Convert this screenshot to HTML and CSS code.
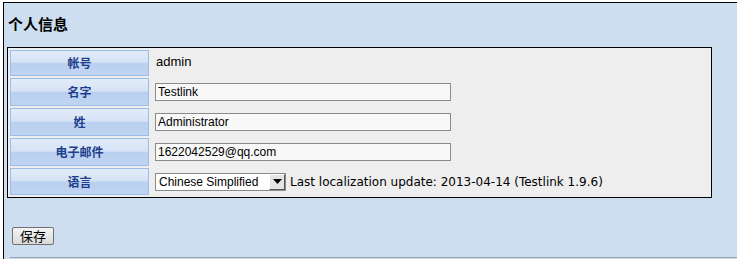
FILE: index.html
```html
<!DOCTYPE html>
<html lang="zh">
<head>
<meta charset="utf-8">
<title>个人信息</title>
<link rel="stylesheet" href="styles.css">
</head>
<body>
<div class="page">
  <h2 class="title">个人信息</h2>
  <div class="form-table">
    <div class="label">帐号</div>
    <div class="value"><span class="plain">admin</span></div>
    <div class="label">名字</div>
    <div class="value"><input class="field" type="text" value="Testlink"></div>
    <div class="label">姓</div>
    <div class="value"><input class="field" type="text" value="Administrator"></div>
    <div class="label">电子邮件</div>
    <div class="value"><input class="field" type="text" value="1622042529@qq.com"></div>
    <div class="label">语言</div>
    <div class="value">
      <span class="select-wrap">
        <select class="select"><option>Chinese Simplified</option></select>
        <span class="select-btn"><svg width="9" height="5" viewBox="0 0 9 5"><path d="M0 0h9L4.5 5z" fill="#000"/></svg></span>
      </span>
      <span class="note">Last localization update: 2013-04-14 (Testlink 1.9.6)</span>
    </div>
  </div>
  <div class="actions"><button class="save" type="button">保存</button></div>
  <div class="bottom-line"></div>
</div>
</body>
</html>
```
FILE: styles.css
```css
html, body {
  margin: 0;
  padding: 0;
  background: #fff;
}
.page {
  margin: 2px 0 0 3px;
  height: 257px;
  box-sizing: border-box;
  border-top: 1px solid #000;
  border-left: 1px solid #000;
  background: #cddef0;
  padding: 12px 0 0 3px;
  overflow: hidden;
}
.title {
  margin: 0 0 14px 1px;
  font: bold 15px/18px "Noto Sans CJK SC", "DejaVu Sans", sans-serif;
  color: #000;
}
.form-table {
  width: 705px;
  box-sizing: border-box;
  border: 1px solid #000;
  background: #eeeeee;
  padding: 2px;
  display: grid;
  grid-template-columns: 139px 1fr;
  grid-template-rows: 26px 28px 28px 28px 27px;
  gap: 2px;
}
.label {
  box-sizing: border-box;
  border: 1px solid #9dbce8;
  background: linear-gradient(#e2ebf8 0%, #d6e3f6 46%, #bad0f0 52%, #bfd4f1 100%);
  color: #1f3f8c;
  font: bold 12px/1 "Noto Sans CJK SC", "DejaVu Sans", sans-serif;
  display: flex;
  align-items: center;
  justify-content: center;
}
.value {
  display: flex;
  align-items: center;
  padding-left: 4px;
  font: 13px "Liberation Sans", Arial, sans-serif;
  color: #000;
}
.plain {
  padding-left: 1px;
  margin-top: -4px;
}
.field {
  width: 296px;
  height: 18px;
  box-sizing: border-box;
  border: 1px solid #8a8a8a;
  background: #f8f8f8;
  padding: 0 2px;
  margin: 0;
  font: 12px "Liberation Sans", Arial, sans-serif;
  color: #000;
  outline: none;
}
.select-wrap {
  position: relative;
  display: inline-block;
  width: 131px;
  height: 18px;
}
.select {
  appearance: none;
  -webkit-appearance: none;
  width: 131px;
  height: 18px;
  box-sizing: border-box;
  border: 1px solid #8a8a8a;
  background: #fff;
  padding: 0 3px;
  margin: 0;
  font: 12px "Liberation Sans", Arial, sans-serif;
  color: #000;
}
.select-btn {
  position: absolute;
  right: 1px;
  top: 1px;
  width: 16px;
  height: 16px;
  box-sizing: border-box;
  background: #e4e4e4;
  border: 1px solid #fff;
  border-right-color: #555;
  border-bottom-color: #555;
  display: flex;
  align-items: center;
  justify-content: center;
}
.note {
  margin-left: 4px;
  font: 12px "DejaVu Sans", Verdana, sans-serif;
  color: #000;
}
.actions {
  margin: 29px 0 0 5px;
}
.save {
  width: 42px;
  height: 18px;
  box-sizing: border-box;
  border: 1px solid #707070;
  border-radius: 2px;
  background: linear-gradient(#f4f4f4, #dadada);
  padding: 0;
  font: 13px/16px "Noto Sans CJK SC", "DejaVu Sans", sans-serif;
  color: #000;
}
.bottom-line {
  margin: 12px 0 0 3px;
  border-top: 1px solid #9aa3ad;
}
```
